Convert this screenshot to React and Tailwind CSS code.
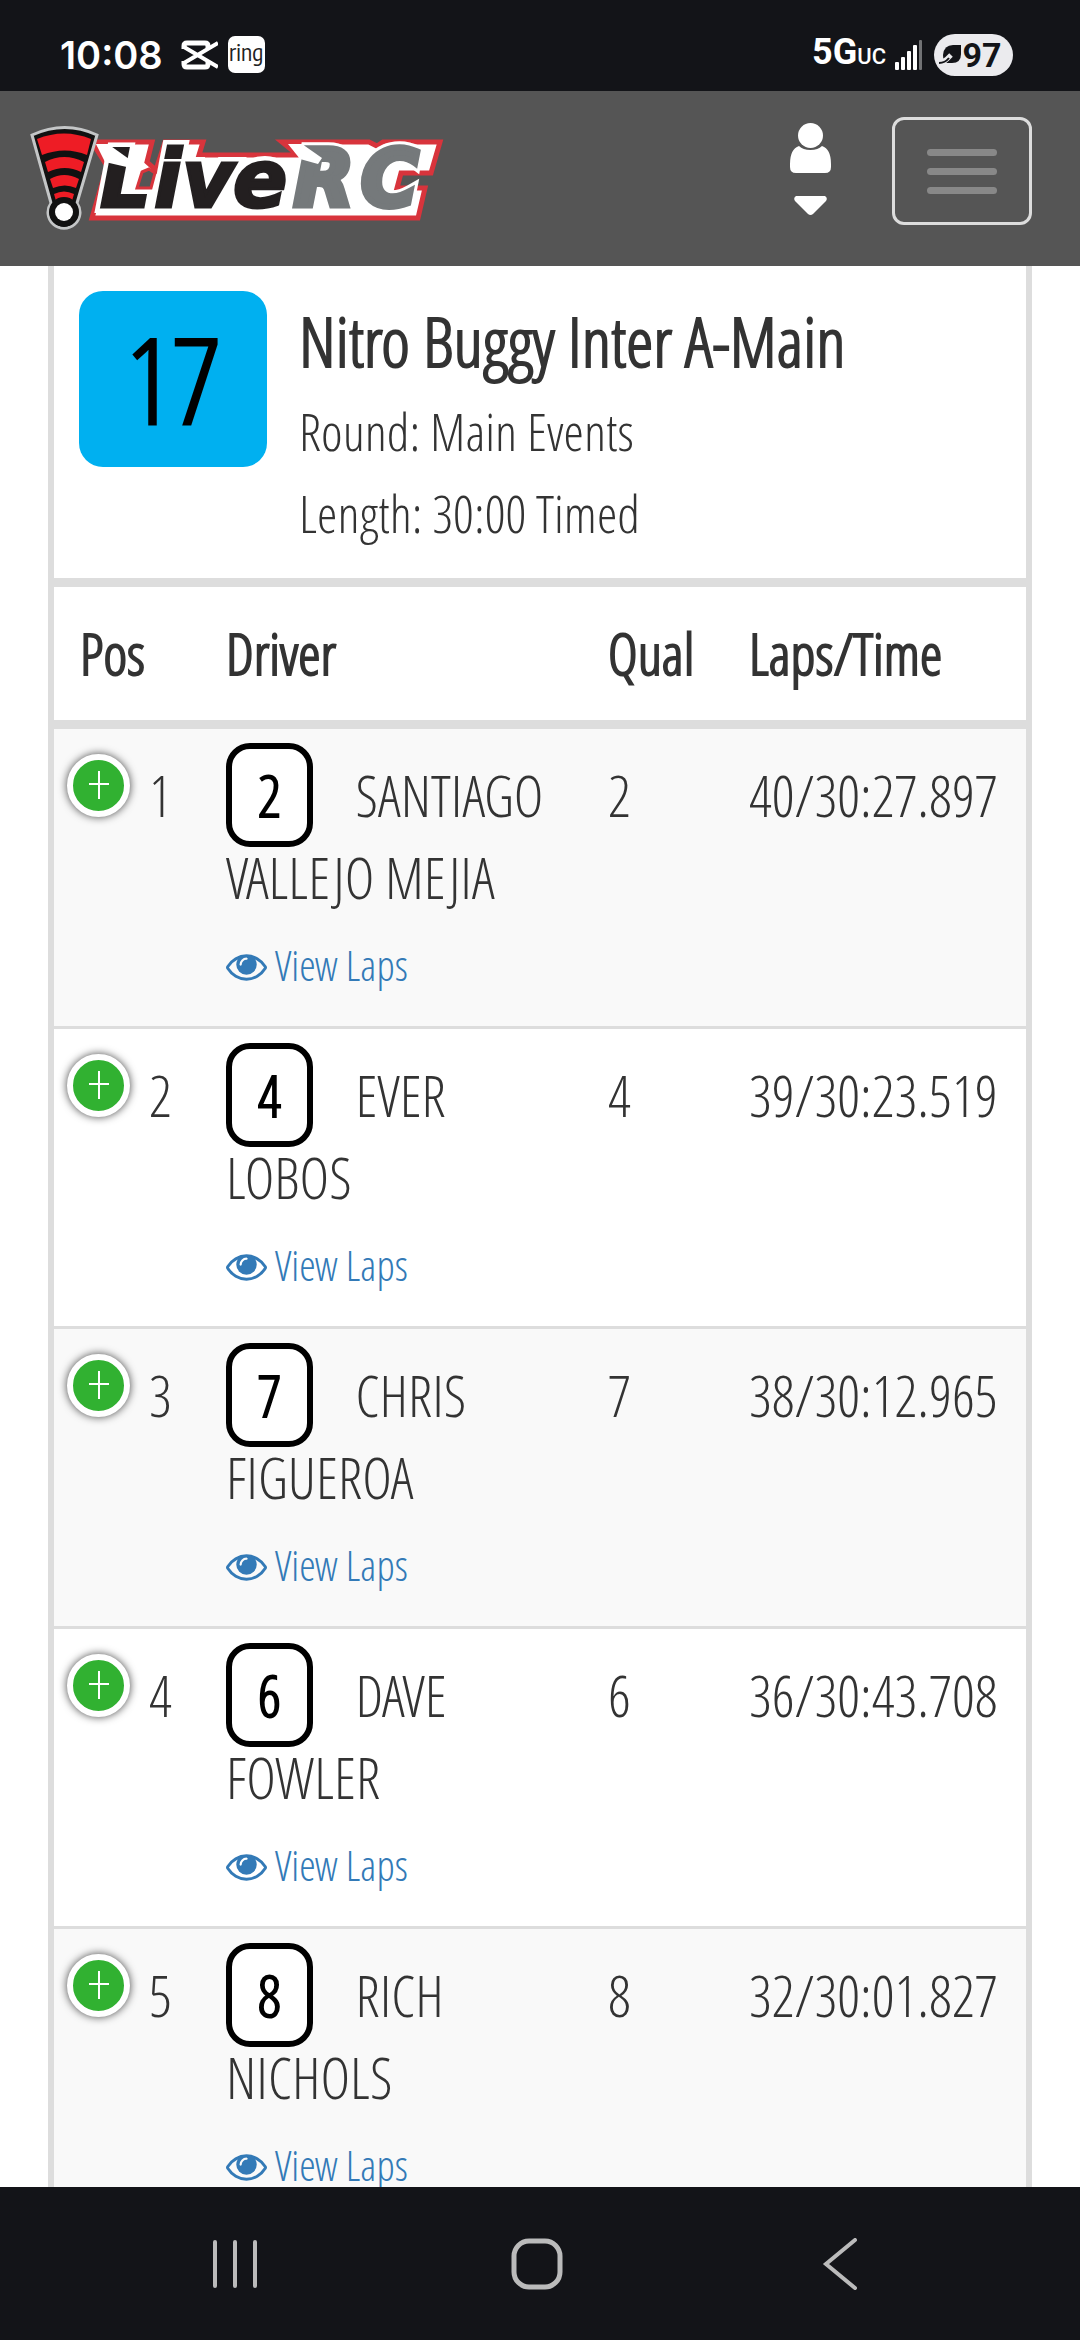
import React from "react";

const results = [
  { pos: 1, car: 2, driver: "SANTIAGO VALLEJO MEJIA", qual: 2, time: "40/30:27.897" },
  { pos: 2, car: 4, driver: "EVER LOBOS", qual: 4, time: "39/30:23.519" },
  { pos: 3, car: 7, driver: "CHRIS FIGUEROA", qual: 7, time: "38/30:12.965" },
  { pos: 4, car: 6, driver: "DAVE FOWLER", qual: 6, time: "36/30:43.708" },
  { pos: 5, car: 8, driver: "RICH NICHOLS", qual: 8, time: "32/30:01.827" },
];

const StatusBar = () => (
  <div className="h-[91px] shrink-0 bg-[#131418] text-white font-['Inter',sans-serif] flex items-center justify-between pl-[60px] pr-[67px] pt-[18px]">
    <div className="flex items-center gap-[10px]">
      <span className="text-[38px] leading-[44px] font-semibold mr-2">10:08</span>

      {/* CapCut */}
      <svg viewBox="0 0 37 30" className="w-[37px] h-[30px]" fill="none" stroke="currentColor" strokeWidth="5">
        <path d="M3 9V6q0-3 3-3h18q3 0 3 3v2M3 21v3q0 3 3 3h18q3 0 3-3v-2" />
        <path d="M3 7l34 20M3 23L37 3" strokeWidth="4" />
      </svg>

      <span className="w-[37px] h-[37px] rounded-[7px] bg-white text-[#222] text-[23px] leading-[32px] text-center font-['Encode_Sans_Condensed','Roboto',sans-serif]">
        ring
      </span>
    </div>

    <div className="flex items-center">
      <span className="flex items-baseline font-['Roboto',sans-serif]">
        <b className="text-[36px] leading-[44px] font-bold">5G</b>
        <span className="text-[22px] leading-[44px] font-medium">UC</span>
      </span>

      <svg viewBox="0 0 27 30" className="w-[27px] h-[30px] ml-[9px] mr-[12px]" fill="currentColor">
        <rect x="0" y="22" width="4" height="8" rx="1" />
        <rect x="6" y="17" width="4" height="13" rx="1" />
        <rect x="12" y="11" width="4" height="19" rx="1" />
        <rect x="18" y="5" width="4" height="25" rx="1" />
        <rect x="24" y="0" width="3" height="30" rx="1" opacity="0.4" />
      </svg>

      <span className="h-[42px] w-[79px] rounded-full bg-[#ebebee] text-[#131418] flex items-center justify-center pr-[6px]">
        <svg viewBox="0 0 23 22" className="w-[23px] h-[22px]">
          <path d="M22 1v9q0 9-9 9H8q-4-2-4-8Q5 1 14 1z" fill="currentColor" />
          <path d="M0 18q5 0 8-3l4-4" fill="none" stroke="#ebebee" strokeWidth="5" />
          <path d="M0 19q6 0 10-5" fill="none" stroke="currentColor" strokeWidth="2" />
        </svg>
        <span className="text-[34px] leading-[42px] font-bold font-['Roboto',sans-serif]">97</span>
      </span>
    </div>
  </div>
);

const Logo = () => (
  <svg viewBox="0 0 424 116" className="w-[424px] h-[116px]" role="img" aria-label="LiveRC">
    <defs>
      <text
        id="wordmark"
        fontFamily="'DejaVu Sans', sans-serif"
        fontWeight="700"
        fontStyle="italic"
        fontSize="80"
        strokeLinejoin="miter"
      >
        <tspan x="80 134 162 213" y="86">Live</tspan>
      </text>
      <text
        id="wordmark-rc"
        fontFamily="'DejaVu Sans', sans-serif"
        fontWeight="700"
        fontStyle="italic"
        fontSize="78"
        strokeLinejoin="miter"
      >
        <tspan x="274 341" y="85">RC</tspan>
      </text>
    </defs>

    {/* badge outline behind the letters */}
    <path
      d="M72 21h60l-5 20 9 8 9-28h38l-4 13h99l-16-13h87l8 4 6-4h57l-9 31h-30l-4 15h28l-7 30H72l15-52z"
      fill="#fff"
      stroke="#d8343c"
      strokeWidth="5"
    />
    <g stroke="#fff" strokeWidth="12">
      <use href="#wordmark" />
      <use href="#wordmark-rc" />
    </g>
    <path d="M122 51l7-3 6 4-4 15h-14z" fill="#555" stroke="#d8343c" strokeWidth="3" />
    <use href="#wordmark" fill="#231f20" stroke="#231f20" strokeWidth="3" />
    <use href="#wordmark-rc" fill="#75797b" stroke="#75797b" strokeWidth="6" />
    <path d="M76 23h12l28 20-5 4-26-6z" fill="#fff" />
    <path d="M268 23h14l20 14-4 6-18-5z" fill="#fff" />

    {/* exclamation mark made of signal waves */}
    <path d="M12 14q33-15 65 0L57 82a16 16 0 1 1-26 0z" fill="#111" stroke="#c4c6c7" strokeWidth="3" />
    <g fill="#ee1c25">
      <path d="M17 18q27-11 54 0l-4 16q-22-9-45 0z" />
      <path d="M25 41q19-10 39 0l-3 10q-16-8-33 0z" />
      <path d="M30 58q14-8 29 0l-3 9q-11-5-23 0z" />
      <path d="M34 73q10-5 20 0l-2 7q-8-4-16 0z" />
    </g>
    <circle cx="44" cy="91" r="15" fill="#111" />
    <circle cx="44" cy="91" r="9" fill="#fff" />
  </svg>
);

const Navbar = () => (
  <header className="h-[175px] shrink-0 bg-[#555] flex items-start justify-between pl-[20px] pr-[48px]">
    <a href="#home" className="mt-[30px]">
      <Logo />
    </a>

    <div className="flex items-start gap-[61px] mt-[26px]">
      <button type="button" aria-label="Account" className="text-white flex flex-col items-center gap-[23px] mt-[6px]">
        <svg viewBox="0 0 41 50" className="w-[41px] h-[50px]" fill="currentColor">
          <circle cx="20.5" cy="12.5" r="12.5" />
          <path d="M9 23q4 4 11.500 4T32 23q9 3 9 18v3q0 6-6 6H6q-6 0-6-6v-3Q0 26 9 23z" />
        </svg>
        <svg viewBox="0 0 33 19" className="w-[33px] h-[19px]" fill="currentColor">
          <path d="M2 0h29q3 2 1 5L19 18q-2.500 2-5 0L1 5q-2-3 1-5z" />
        </svg>
      </button>

      <button
        type="button"
        aria-label="Toggle navigation"
        className="w-[140px] h-[108px] border-[3px] border-[#ddd] rounded-xl flex flex-col items-center justify-center gap-[12px]"
      >
        <span className="w-[70px] h-[7px] rounded-full bg-[#888]" />
        <span className="w-[70px] h-[7px] rounded-full bg-[#888]" />
        <span className="w-[70px] h-[7px] rounded-full bg-[#888]" />
      </button>
    </div>
  </header>
);

const EyeIcon = () => (
  <svg viewBox="0 384 1792 1152" className="inline-block align-baseline w-[41px] h-[27px]" fill="currentColor">
    <path d="M1664 960q-152-236-381-353q61 104 61 225q0 185-131.500 316.500t-316.500 131.500t-316.500-131.500t-131.500-316.500q0-121 61-225q-229 117-381 353q133 205 333.500 326.500t434.500 121.500t434.500-121.500t333.500-326.500zM944 576q0-20-14-34t-34-14q-125 0-214.500 89.500t-89.500 214.500q0 20 14 34t34 14t34-14t14-34q0-86 61-147t147-61q20 0 34-14t14-34zM1792 960q0 34-20 69q-140 230-376.500 368.500t-499.500 138.500t-499.500-139t-376.500-368q-20-35-20-69t20-69q140-229 376.500-368t499.500-139t499.500 139t376.500 368q20 35 20 69z" />
  </svg>
);

const ResultRow = ({ row }) => (
  <tr className="align-top border-b-[3px] border-[#ddd] odd:bg-[#f9f9f9]">
    <td className="pt-[25px] pl-[13px]">
      <div className="flex items-start gap-[19px]">
        <button
          type="button"
          aria-label={`Show details for ${row.driver}`}
          className="w-[63px] h-[63px] shrink-0 rounded-full border-[6px] border-white bg-[#31b131] shadow-[0_0_9px_#444] flex items-center justify-center"
        >
          <svg viewBox="0 0 20 28" className="w-[20px] h-[28px]" stroke="#fff" strokeWidth="2">
            <path d="M10 0v28M0 13h20" />
          </svg>
        </button>
        <span>{row.pos}</span>
      </div>
    </td>
    <td className="pt-[25px] px-6 pb-5">
      <span className="border-[6px] border-black rounded-3xl bg-white text-black px-[26px] py-[7px] mr-[32px] [-webkit-text-stroke:2px]">
        {row.car}
      </span>{" "}
      {row.driver}
      <div className="pt-[6px] text-[42px]">
        <a href={`#laps-${row.car}`} className="text-[#337ab7]">
          <EyeIcon /> View Laps
        </a>
      </div>
    </td>
    <td className="pt-[25px] px-6">{row.qual}</td>
    <td className="pt-[25px] pl-6 whitespace-nowrap">{row.time}</td>
  </tr>
);

const BottomNav = () => (
  <nav className="h-[153px] shrink-0 bg-[#131418] text-[#bbb] grid grid-cols-3 items-center pl-[84px] pr-[89px]">
    <button type="button" aria-label="Recent apps" className="flex justify-center">
      <svg viewBox="0 0 52 52" className="w-[52px] h-[52px]" fill="none" stroke="currentColor" strokeWidth="4" strokeLinecap="round">
        <path d="M6 4v44M26 4v44M46 4v44" />
      </svg>
    </button>
    <button type="button" aria-label="Home" className="flex justify-center">
      <svg viewBox="0 0 52 52" className="w-[52px] h-[52px]" fill="none" stroke="currentColor" strokeWidth="5">
        <rect x="3" y="3" width="46" height="46" rx="15" />
      </svg>
    </button>
    <button type="button" aria-label="Back" className="flex justify-center">
      <svg viewBox="0 0 52 52" className="w-[52px] h-[52px]" fill="none" stroke="currentColor" strokeWidth="4" strokeLinecap="round">
        <path d="M41 2L12 26l29 24" />
      </svg>
    </button>
  </nav>
);

const App = () => {
  return (
    <div className="h-screen flex flex-col bg-white text-[#333] font-['Open_Sans_Condensed_Light','Open_Sans',sans-serif]">
      <StatusBar />
      <Navbar />

      <main className="flex-1 min-h-0 overflow-hidden px-12">
        <section className="border-x-[6px] border-[#ddd]">
          <div className="flex gap-[32px] pt-[25px] px-[25px] pb-6 border-b-[9px] border-[#ddd]">
            <div className="w-[188px] h-[176px] shrink-0 rounded-3xl bg-[#00b0f0] text-black text-[118px] leading-[176px] text-center [-webkit-text-stroke:3px]">
              17
            </div>
            <div className="text-[52px] leading-[82px] pt-2">
              <h1 className="text-[69px] pb-[9px] [-webkit-text-stroke:2px]">
                Nitro Buggy Inter A-Main
              </h1>
              <p>Round: Main Events</p>
              <p>Length: 30:00 Timed</p>
            </div>
          </div>

          <table className="w-full table-fixed border-collapse text-[57px] leading-[82px]">
            <thead>
              <tr className="h-[137px] text-left border-b-[9px] border-[#ddd] [-webkit-text-stroke:2px]">
                <th className="w-[148px] pl-[26px] font-normal">Pos</th>
                <th className="px-6 font-normal">Driver</th>
                <th className="w-[141px] pl-6 font-normal">Qual</th>
                <th className="w-[301px] pl-6 font-normal">Laps/Time</th>
              </tr>
            </thead>
            <tbody>
              {results.map((row) => (
                <ResultRow key={row.pos} row={row} />
              ))}
            </tbody>
          </table>
        </section>
      </main>

      <BottomNav />
    </div>
  );
};

export default App;
